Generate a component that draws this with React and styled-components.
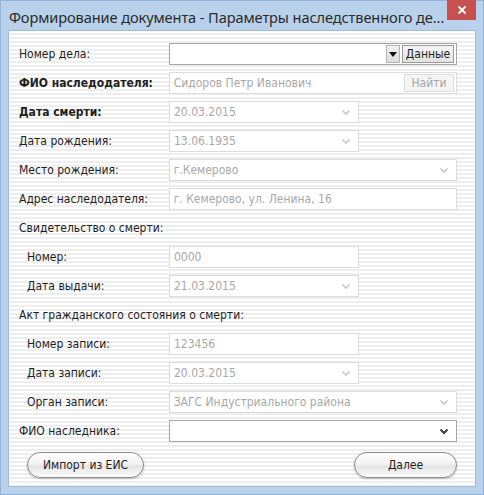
import React from "react";
import styled, { createGlobalStyle } from "styled-components";

const Global = createGlobalStyle`
  html, body { margin: 0; padding: 0; background: #b9d1ea; }
  body { width: 484px; height: 495px; overflow: hidden; }
`;

const Window = styled.div`
  width: 484px;
  height: 495px;
  box-sizing: border-box;
  background: #b9d1ea;
  border: 1px solid #93b4d9;
  display: flex;
  flex-direction: column;
  font-family: "DejaVu Sans Condensed", "DejaVu Sans", sans-serif;
`;

const TitleBar = styled.div`
  height: 29px;
  display: flex;
  align-items: flex-start;
  justify-content: space-between;
  padding-left: 8px;
`;

const Title = styled.div`
  font-family: "Noto Sans", sans-serif;
  font-size: 14.6px;
  color: #2b2b2b;
  line-height: 20px;
  margin-top: 6px;
  white-space: nowrap;
  letter-spacing: -0.1px;
`;

const CloseButton = styled.div`
  width: 29px;
  height: 20px;
  margin-right: 7px;
  margin-top: -1px;
  background: #c75050;
  display: flex;
  align-items: center;
  justify-content: center;
`;

const Content = styled.div`
  flex: 1;
  margin: 0 7px 7px 7px;
  border: 1px solid #a3bcd6;
  background: repeating-linear-gradient(
    to bottom,
    #ffffff 0px,
    #ffffff 2px,
    #eeeeee 2px,
    #eeeeee 4px
  );
  padding: 12px 18px 0 10px;
  display: flex;
  flex-direction: column;
  gap: 7px;
`;

const Row = styled.div`
  display: flex;
  align-items: center;
  height: 22px;
  padding-left: ${(p) => (p.$indent ? 8 : 0)}px;
`;

const Section = styled.div`
  height: 22px;
  display: flex;
  align-items: center;
  font-size: 12px;
  color: #1e1e1e;
`;

const Label = styled.div`
  width: ${(p) => (p.$indent ? 142 : 150)}px;
  font-size: 12px;
  font-weight: ${(p) => (p.$bold ? "bold" : "normal")};
  color: #1e1e1e;
  white-space: nowrap;
`;

const Field = styled.div`
  box-sizing: border-box;
  height: 22px;
  width: ${(p) => (p.$short ? 190 : 289)}px;
  background: #ffffff;
  border: 1px solid ${(p) => (p.$enabled ? "#a6a6a6" : "#dcdcdc")};
  display: flex;
  align-items: center;
  font-size: 12px;
  color: ${(p) => (p.$enabled ? "#1e1e1e" : "#a8a8a8")};
  padding-left: 4px;
  padding-right: 2px;
`;

const FieldText = styled.span`
  flex: 1;
  white-space: nowrap;
`;

const Chevron = ({ dark }) => (
  <svg width="14" height="14" viewBox="0 0 14 14" style={{ marginRight: 3 }}>
    <path
      d="M3.5 5.5 L7 9 L10.5 5.5"
      fill="none"
      stroke={dark ? "#3c3c3c" : "#c4c8cc"}
      strokeWidth={dark ? 2 : 1.6}
    />
  </svg>
);

const DropButton = styled.div`
  box-sizing: border-box;
  width: 14px;
  height: 18px;
  background: linear-gradient(#f2f2f2, #dcdcdc);
  border: 1px solid #b4b4b4;
  display: flex;
  align-items: center;
  justify-content: center;
  margin-right: 2px;
`;

const SmallButton = styled.div`
  box-sizing: border-box;
  height: 18px;
  width: ${(p) => p.$w}px;
  border: 1px solid ${(p) => (p.$disabled ? "#dedede" : "#9a9a9a")};
  background: ${(p) => (p.$disabled ? "#f4f4f4" : "linear-gradient(#f6f6f6, #e2e2e2)")};
  color: ${(p) => (p.$disabled ? "#a6a6a6" : "#1e1e1e")};
  font-size: 12px;
  display: flex;
  align-items: center;
  justify-content: center;
`;

const Footer = styled.div`
  display: flex;
  justify-content: space-between;
  padding: 3px 0 0 8px;
`;

const PillButton = styled.div`
  box-sizing: border-box;
  width: ${(p) => p.$w}px;
  height: 26px;
  border-radius: 13px;
  border: 1px solid #8c8c8c;
  background: linear-gradient(#ffffff 0%, #f3f3f3 45%, #e4e4e4 55%, #fbfbfb 100%);
  box-shadow: 0 1px 2px rgba(0, 0, 0, 0.25);
  display: flex;
  align-items: center;
  justify-content: center;
  font-size: 12px;
  color: #1e1e1e;
`;

const rowsTop = [
  { label: "ФИО наследодателя:", bold: true, value: "Сидоров Петр Иванович", find: true },
  { label: "Дата смерти:", bold: true, value: "20.03.2015", short: true, chevron: true },
  { label: "Дата рождения:", value: "13.06.1935", short: true, chevron: true },
  { label: "Место рождения:", value: "г.Кемерово", chevron: true },
  { label: "Адрес наследодателя:", value: "г. Кемерово, ул. Ленина, 16" },
];

const FormRow = ({ label, bold, value, short, chevron, find, indent, enabled }) => (
  <Row $indent={indent}>
    <Label $bold={bold} $indent={indent}>{label}</Label>
    <Field $short={short} $enabled={enabled}>
      <FieldText>{value}</FieldText>
      {chevron && <Chevron dark={enabled} />}
      {find && <SmallButton $w={50} $disabled>Найти</SmallButton>}
    </Field>
  </Row>
);

export default function App() {
  return (
    <>
      <Global />
      <Window>
        <TitleBar>
          <Title>Формирование документа - Параметры наследственного де...</Title>
          <CloseButton>
            <svg width="10" height="10" viewBox="0 0 10 10">
              <path d="M1.5 1.5 L8.5 8.5 M8.5 1.5 L1.5 8.5" stroke="#fff" strokeWidth="1.8" />
            </svg>
          </CloseButton>
        </TitleBar>
        <Content>
          <Row>
            <Label>Номер дела:</Label>
            <Field $enabled>
              <FieldText />
              <DropButton>
                <svg width="8" height="5" viewBox="0 0 8 5">
                  <path d="M0 0 H8 L4 5 Z" fill="#111" />
                </svg>
              </DropButton>
              <SmallButton $w={52}>Данные</SmallButton>
            </Field>
          </Row>
          {rowsTop.map((r) => (
            <FormRow key={r.label} {...r} />
          ))}
          <Section>Свидетельство о смерти:</Section>
          <FormRow indent label="Номер:" value="0000" short />
          <FormRow indent label="Дата выдачи:" value="21.03.2015" short chevron />
          <Section>Акт гражданского состояния о смерти:</Section>
          <FormRow indent label="Номер записи:" value="123456" short />
          <FormRow indent label="Дата записи:" value="20.03.2015" short chevron />
          <FormRow indent label="Орган записи:" value="ЗАГС Индустриального района" chevron />
          <FormRow label="ФИО наследника:" value="" chevron enabled />
          <Footer>
            <PillButton $w={117}>Импорт из ЕИС</PillButton>
            <PillButton $w={103}>Далее</PillButton>
          </Footer>
        </Content>
      </Window>
    </>
  );
}
